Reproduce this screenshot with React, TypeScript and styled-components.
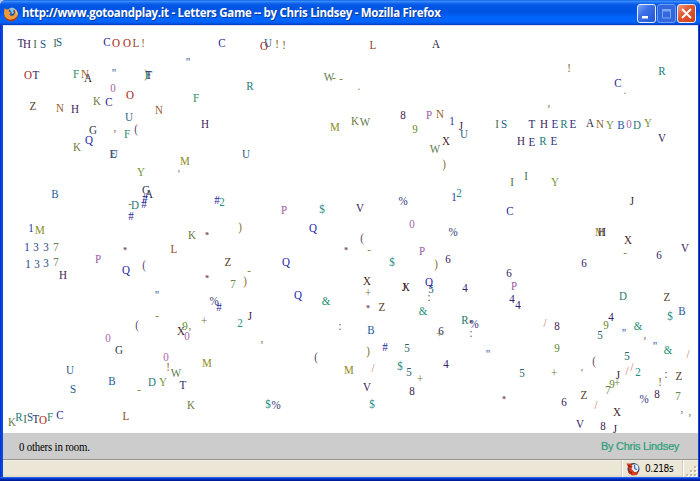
import React from "react";
import styled, { createGlobalStyle } from "styled-components";

const GlobalStyle = createGlobalStyle`
  * { box-sizing: border-box; }
  body { margin: 0; overflow: hidden; background: #b9c6ea; }
`;

const Window = styled.div`
  width: 700px;
  height: 481px;
  display: flex;
  flex-direction: column;
  overflow: hidden;
  border-radius: 6px 6px 0 0;
  background: #0a46e4;
`;

const TitleBar = styled.header`
  height: 25px;
  flex: none;
  display: flex;
  align-items: center;
  padding: 2px 4px 0 3px;
  background: linear-gradient(
    #0a50dc 0, #3d95ff 1px, #2a80f8 2px, #0a5ce8 4px, #0054e3 7px,
    #0055e5 13px, #0064fb 17px, #0066ff 21px, #005bf0 23px, #0038b8 25px
  );
`;

const Title = styled.h1`
  margin: 0 0 1px 3px;
  flex: 1;
  font: 700 11.5px/20px "Open Sans", sans-serif;
  letter-spacing: -0.29px;
  color: #fff;
  white-space: nowrap;
  text-shadow: 1px 1px 0 #0a3a9c;
`;

const Controls = styled.div`
  display: flex;
  gap: 1px;
`;

const ControlButton = styled.button<{ $kind: "min" | "max" | "close" }>`
  width: 19px;
  height: 19px;
  padding: 0;
  display: grid;
  place-items: center;
  border-radius: 3px;
  border: 1px solid ${(p) => (p.$kind === "max" ? "#6f9cf0" : "#e4edfc")};
  background: ${(p) =>
    p.$kind === "close"
      ? "linear-gradient(135deg, #f09a80, #e0532c 45%, #cf4119)"
      : p.$kind === "max"
        ? "#3168e0"
        : "linear-gradient(135deg, #7ba6f5, #3a6fe6 40%, #2257d6)"};
`;

const Content = styled.div`
  flex: 1;
  min-height: 0;
  display: flex;
  flex-direction: column;
  margin: 0 2px 0 3px;
`;

const Stage = styled.main`
  position: relative;
  flex: 1;
  overflow: hidden;
  background: #fff;
  border-top: 1px solid #dbe3f3;
`;

const Glyph = styled.span<{ $x: number; $y: number; $c: string; $small: boolean }>`
  position: absolute;
  left: ${(p) => p.$x - 13}px;
  top: ${(p) => p.$y - 33}px;
  width: 20px;
  text-align: center;
  font: ${(p) => (p.$small ? "700 9px" : "12px")}/14px "Liberation Serif", serif;
  transform: scaleX(0.92);
  color: ${(p) => p.$c};
`;

const RoomBar = styled.footer`
  height: 27px;
  flex: none;
  display: flex;
  justify-content: space-between;
  align-items: center;
  padding: 0 19px 0 16px;
  background: #ccc;
  border-bottom: 1px solid #96968e;
`;

const Occupants = styled.span`
  font: 12px/14px "Liberation Serif", serif;
  letter-spacing: -0.2px;
  transform: scaleX(0.9);
  transform-origin: 0 50%;
  color: #000;
  padding-top: 2px;
`;

const Author = styled.span`
  font: 11px/14px "Liberation Sans", sans-serif;
  letter-spacing: -0.28px;
  -webkit-text-stroke: 0.2px #2a9d78;
  color: #2a9d78;
`;

const StatusBar = styled.div`
  height: 17px;
  flex: none;
  display: flex;
  background: linear-gradient(#f8f6ed 0, #ece6d6 1px, #ece6d6 15px, #dedbc8 16px);
`;

const StatusMessage = styled.div`
  flex: 1;
  border-right: 1px solid #d2cdbc;
`;

const LoadTime = styled.div`
  width: 61px;
  display: flex;
  align-items: center;
  gap: 5px;
  padding-left: 3px;
  border-left: 1px solid #fff;
  border-right: 1px solid #d2cdbc;
  font: 10px/14px "DejaVu Sans Condensed", "DejaVu Sans", sans-serif;
  letter-spacing: -0.35px;
  color: #000;
`;

const GripCell = styled.div`
  width: 15px;
  display: flex;
  align-items: flex-end;
  justify-content: flex-end;
  padding-right: 1px;
  border-left: 1px solid #fff;
`;

const BottomEdge = styled.div`
  height: 4px;
  flex: none;
  background: linear-gradient(#4a82f5 0, #0a46e4 1px, #0030c0 2px, #00158a 4px);
`;

const FrameBody = styled.div`
  flex: 1;
  min-height: 0;
  display: flex;
  flex-direction: column;
  box-shadow: inset 1px 0 #0a34d0, inset -1px 0 #00148c;
`;

const COLORS: Record<string, string> = {
  A: "#1c2038", B: "#1c5c9c", C: "#1c1c9c", D: "#1c8078", E: "#302c7c",
  F: "#2c8c64", G: "#2c4050", H: "#401c54", I: "#506c4c", J: "#401c40",
  K: "#6c7838", L: "#904424", M: "#8c8c24", N: "#946024", O: "#a81c0c",
  P: "#985c9c", Q: "#1c28a8", R: "#1c7c78", S: "#1c5c88", T: "#24286c",
  U: "#2c5c80", V: "#3c2060", W: "#607c50", X: "#442428", Y: "#789434",
  Z: "#543c1c", "0": "#a864a8", "1": "#1c34a0", "2": "#209088",
  "3": "#244480", "4": "#342070", "5": "#28646c", "6": "#30205c",
  "7": "#64844c", "8": "#482050", "9": "#648c2c", "#": "#2428a0",
  $: "#1c8884", "%": "#343878", "&": "#209070", "*": "#785068",
  "(": "#5c4868", ")": "#84702c", "-": "#84883c", "+": "#6c7c34",
  "/": "#cc6858", '"': "#344ca0", "'": "#945868", ",": "#806858",
  ".": "#a07850", ":": "#684c58", "!": "#846420",
};

type Letter = [string, number, number];

const LETTERS: Letter[] = [
  ["T", 20.5, 43], ["H", 26.5, 44], ["I", 34.5, 43.5], ["S", 42.7, 44], ["I", 55, 43], ["S", 59, 42],
  ["C", 106.7, 42.3], ["O", 115.7, 43.3], ["O", 127, 43], ["L", 135.7, 43.3], ["!", 143.3, 43], ["C", 222, 43],
  ['"', 188, 62], ["O", 28, 74.5], ["T", 35.7, 75], ["F", 76, 74], ["N", 85, 73.5], ["A", 88, 77.5],
  ['"', 114.3, 72.5], ["0", 113, 87.5], ["K", 97.3, 100.5], ["C", 108.7, 101.5], ["O", 130, 95.3],
  [")", 145.5, 74], ["F", 148, 75], ["T", 148.5, 75], ["Z", 33, 106], ["N", 60, 107.5], ["H", 75.3, 109],
  ["F", 196, 98], ["N", 158.5, 110], ["U", 129, 117], ["G", 92.7, 130], ["Q", 89, 140], ["K", 77.3, 147.3],
  [",", 115, 127], ["F", 127, 134.3], ["(", 135.7, 129], ["H", 204.7, 124], ["E", 112.5, 154], ["U", 113.5, 153.5],
  ["Y", 141, 171.5], ["M", 185, 161.3], ["'", 178.7, 174], ["B", 54.7, 194.3], ["G", 145.7, 190],
  ["A", 149.3, 193.5], ["#", 145, 197.5], ["#", 144.3, 203.7], ["D", 135, 204.7], ["-", 130.3, 204],
  ["#", 131.3, 216.3], ["#", 217.3, 200.3], ["2", 221.7, 202], ["1", 30.7, 228], ["M", 40, 230],
  ["1", 27, 247], ["3", 36.3, 247], ["3", 46, 247], ["7", 55.7, 247], ["1", 28, 264], ["3", 37, 264],
  ["3", 46, 263], ["7", 56, 262], ["H", 63, 275], ["P", 98.3, 259], ["*", 125, 250], ["Q", 125.7, 269.5],
  ["(", 144, 265], ['"', 156.7, 295], ["-", 157, 316], ["L", 173.7, 249], ["K", 192, 235], ["*", 206.7, 234.5],
  ["*", 206.7, 278], ["Z", 228.3, 261.7], ["7", 233, 284.3], ["%", 214.3, 300.7], ["#", 218.7, 306.7],
  ["(", 137.3, 325], ["0", 107.7, 338], ["G", 118.7, 350.3], ["X", 181.3, 331.3], ["9", 185, 325.7],
  [",", 190.3, 324.5], ["0", 186.7, 336.3], ["+", 203.7, 320.7], ["0", 165.7, 357.3], ["!", 167.7, 367],
  ["W", 176, 372.7], ["M", 206.7, 363.3], ["U", 70, 370.3], ["S", 73, 388.7], ["B", 112, 381],
  ["D", 152.3, 382.3], ["Y", 163.3, 381.7], ["-", 139, 390], ["T", 183.3, 385], ["K", 191.3, 405.3],
  ["L", 126, 416.3], ["K", 11.7, 421.7], ["R", 18.7, 417.3], ["I", 25.3, 419.3], ["S", 30.3, 417],
  ["T", 36, 419], ["O", 43, 419.7], ["F", 49.7, 417], ["C", 60, 414.7],
  ["O", 264.3, 45.7], ["U", 268, 43.3], ["!", 277, 43.7], ["!", 284, 44.7], ["L", 372.7, 45], ["A", 436.3, 44],
  ["R", 250, 86], ["W", 328.7, 77], ["-", 334.3, 77.5], ["-", 341, 78.5], [".", 359, 85.5], ["8", 403, 115],
  ["P", 429, 115], ["N", 439.7, 114.3], ["M", 335, 126.7], ["K", 354.7, 121.3], ["W", 365, 122],
  ["9", 415, 129], ["1", 452.3, 121.3], ["J", 460.7, 126], ["U", 464.3, 134], ["X", 446, 141.3],
  ["W", 435.3, 149], [")", 443.7, 164], ["U", 246.3, 154], ["P", 284.3, 210.3], ["$", 322, 208.7],
  ["V", 359.7, 208.3], ["%", 403, 201], ["1", 454, 197], ["2", 459.3, 193.3], [")", 240.3, 227],
  ["Q", 313, 228], ["(", 362, 238], ["0", 412.3, 223.7], ["%", 453.3, 232.3], ["*", 345.7, 250],
  ["-", 369, 250], ["P", 422.3, 251.3], ["$", 391.7, 262], [")", 435.7, 264], ["6", 448, 259.3],
  ["Q", 285.7, 261.5], ["-", 248.7, 271], [")", 244.7, 281], ["Q", 298.3, 294.5], ["&", 326, 301.3],
  ["X", 367, 281], ["+", 367.7, 292.7], ["*", 368, 308], ["Z", 382, 307.3], ["J", 403.7, 287],
  ["X", 406.3, 286.7], ["5", 431, 288.5], ["Q", 429.3, 282.3], [":", 428.7, 297], ["&", 423, 310.7],
  ["4", 464.7, 288], ["J", 249.7, 315.7], ["2", 240.3, 322.7], [",", 261.7, 337.5], [":", 340, 325.5],
  ["B", 370.7, 329.7], ["(", 316, 357], [")", 368, 351], ["#", 384.7, 347], ["5", 406.7, 347.7],
  ["6", 440.7, 330.7], ["+", 438.7, 333.7], ["M", 349, 370], ["/", 372.7, 368], ["$", 399.7, 366],
  ["5", 409, 372], ["4", 446.3, 364.3], ["+", 419.7, 378.7], ["8", 412.3, 391], ["V", 367.3, 387],
  ["$", 268.3, 404.3], ["%", 276.3, 405.3], ["$", 372, 403.7], ["R", 465, 320],
  ["!", 568.7, 67.7], ["R", 662.3, 71], ["C", 618.3, 83], [".", 624.7, 90], [",", 549, 102],
  ["I", 496.7, 124.3], ["S", 504.3, 124], ["T", 532.3, 124], ["H", 544, 124.3], ["E", 555.3, 124],
  ["R", 564.3, 124], ["E", 572.7, 124], ["A", 590, 122.7], ["N", 600.3, 124.3], ["Y", 609.7, 125],
  ["B", 621, 124.7], ["0", 628.7, 123.7], ["D", 637, 124.7], ["Y", 648.3, 123.3], ["H", 521.3, 141.3],
  ["E", 531.7, 142], ["R", 542.7, 140.7], ["E", 553.7, 141.3], ["V", 661.7, 137.7], ["I", 512.3, 182],
  ["I", 526.3, 176], ["Y", 555, 182], ["J", 632, 201], ["C", 510.3, 210.7], ["M", 599.5, 231.7],
  ["H", 601.5, 231.7], ["X", 627.7, 240.3], ["-", 625.3, 253], ["V", 685, 248.3], ["6", 659.3, 255],
  ["6", 584.3, 263.3], ["6", 509, 273], ["P", 514.3, 286.3], ["4", 512.3, 299.3], ["4", 517.7, 305.3],
  ["D", 623, 296], ["Z", 667, 297.3], ["B", 682.3, 311.3], ["$", 670.3, 316], ["4", 611.3, 316.7],
  ["*", 471, 323], ["%", 474, 324], [":", 471, 332.5], ['"', 487.7, 353.5], ["/", 544.7, 323.3],
  ["8", 557.3, 326], ["9", 606, 325], ["5", 600, 335], ['"', 623.7, 333], ["&", 638.3, 326],
  [",", 645, 334], ['"', 655.3, 345.5], ["&", 668, 349.7], ["/", 688.3, 353.7], ["9", 556.7, 348.3],
  ["5", 627, 356.3], ["(", 594, 361.3], ["'", 581.7, 373], ["5", 522, 373.3], ["+", 553.7, 373.3],
  ["J", 618, 375], ["/", 627.3, 371], ["/", 632.3, 367], ["2", 638.3, 372], ["9", 612, 384],
  ["7", 608, 390], ["+", 616.7, 383], ["!", 660, 382], [":", 665.7, 374], ["Z", 678.7, 376],
  ["*", 504.3, 399.3], ["6", 564.3, 402.3], ["Z", 584, 394.7], ["/", 596, 405], ["X", 617, 412],
  ["%", 644.3, 399.3], ["8", 657.3, 394.3], ["7", 678.3, 396], [",", 681.7, 408], [",", 689.7, 410.5],
  ["V", 580.3, 424], ["8", 602.7, 426], ["J", 615.3, 429],
];

const FirefoxLogo = () => (
  <svg width="16" height="16" viewBox="0 0 16 16">
    <circle cx="8.2" cy="7.6" r="6.2" fill="#2a5ba8" />
    <path d="M6 3c2-2 5-1 6 0l-2 2 1 2-2 1-1-3z" fill="#86c3ee" />
    <path
      d="M1.5 2.2 3.8 3.6 6.6 3.3 5.6 5.4 8 6.6 6.4 8.2c.8 2 3 2.2 4.5.7 1.6-1.6 1.2-4.3.4-6C14 4 15.4 6.5 14.8 9.3 14 13 11.200 15 7.800 14.800 3.800 14.500 1 11.500 1 7.800Z"
      fill="#f09a3c"
    />
    <path d="M1 8c1 4 4 6 7.500 5.600 3-.3 5-2 6-4.600 0 4-3 6.300-6.500 6.300C4 15.300 1 12 1 8Z" fill="#a83c14" />
    <path d="m11.300 2.900 2 2.200.5 3.400" fill="none" stroke="#ffd070" />
  </svg>
);

const TimerIcon = () => (
  <svg width="14" height="14" viewBox="0 0 14 14">
    <circle cx="7.5" cy="7" r="6" fill="#283858" />
    <circle cx="8.5" cy="6.3" r="4" fill="#e8eff8" />
    <path d="M.5 1.500 5 1.500 6.500 4.500 5.500 7 9 10.500 12.500 9.500 11 13 6 13.500 2 10.500 3 7Z" fill="#d83c18" />
    <path d="m8.500 3 .3 3.500 2.200 1" fill="none" stroke="#3c70b8" strokeWidth="1.3" />
    <path d="m2 3.500 3 1.500M3 9l3 2" stroke="#601810" />
  </svg>
);

const MinimizeIcon = () => (
  <svg width="17" height="17" viewBox="0 0 17 17"><path fill="#fff" d="M4 11h6v2.500H4z" /></svg>
);

const MaximizeIcon = () => (
  <svg width="17" height="17" viewBox="0 0 17 17">
    <path fill="none" stroke="#7ba4f3" d="M4.500 5v8h8V5z" />
    <path fill="#7ba4f3" d="M4 4h9v2.500H4z" />
  </svg>
);

const CloseIcon = () => (
  <svg width="17" height="17" viewBox="0 0 17 17">
    <path stroke="#fff" strokeWidth="2" d="m4 4 9 9m0-9-9 9" />
  </svg>
);

const Grip = () => (
  <svg width="11" height="12" viewBox="0 0 11 12">
    <path fill="#fff" d="M9 2h2v2H9zM5 6h2v2H5zM9 6h2v2H9zM1 10h2v2H1zM5 10h2v2H5zM9 10h2v2H9z" />
    <path fill="#c0bca8" d="M8 1h2v2H8zM4 5h2v2H4zM8 5h2v2H8zM0 9h2v2H0zM4 9h2v2H4zM8 9h2v2H8z" />
  </svg>
);

export default function App() {
  return (
    <>
      <GlobalStyle />
      <Window>
        <TitleBar>
          <FirefoxLogo />
          <Title>http://www.gotoandplay.it - Letters Game -- by Chris Lindsey - Mozilla Firefox</Title>
          <Controls>
            <ControlButton $kind="min" aria-label="Minimize"><MinimizeIcon /></ControlButton>
            <ControlButton $kind="max" aria-label="Maximize"><MaximizeIcon /></ControlButton>
            <ControlButton $kind="close" aria-label="Close"><CloseIcon /></ControlButton>
          </Controls>
        </TitleBar>
        <FrameBody>
          <Content>
            <Stage>
              {LETTERS.map(([char, x, y], i) => (
                <Glyph key={i} $x={x} $y={y} $c={COLORS[char]} $small={char === "*"}>{char}</Glyph>
              ))}
            </Stage>
            <RoomBar>
              <Occupants>0 others in room.</Occupants>
              <Author>By Chris Lindsey</Author>
            </RoomBar>
            <StatusBar>
              <StatusMessage />
              <LoadTime><TimerIcon />0.218s</LoadTime>
              <GripCell><Grip /></GripCell>
            </StatusBar>
          </Content>
          <BottomEdge />
        </FrameBody>
      </Window>
    </>
  );
}
